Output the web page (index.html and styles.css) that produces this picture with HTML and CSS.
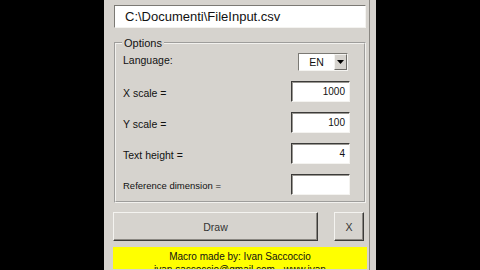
FILE: index.html
```html
<!DOCTYPE html>
<html lang="it">
<head>
    <meta charset="UTF-8">
    <meta name="viewport" content="width=device-width, initial-scale=1.0">
    <title>Macro</title>
    <link rel="stylesheet" href="styles.css">
</head>
<body>
    <div class="screen">
        <div class="window">
            <div class="panel">
                <div class="path-box">C:\Documenti\FileInput.csv</div>

                <fieldset class="options">
                    <legend>Options</legend>
                    <div class="row row-lang">
                        <span class="label">Language:</span>
                        <div class="combo">
                            <span class="combo-value">EN</span>
                            <span class="combo-btn">
                                <svg width="7" height="4" viewBox="0 0 7 4"><path d="M0 0h7L3.5 4z" fill="#000"/></svg>
                            </span>
                        </div>
                    </div>
                    <div class="row">
                        <span class="label">X scale =</span>
                        <div class="field">1000</div>
                    </div>
                    <div class="row">
                        <span class="label">Y scale =</span>
                        <div class="field">100</div>
                    </div>
                    <div class="row">
                        <span class="label">Text height =</span>
                        <div class="field">4</div>
                    </div>
                    <div class="row">
                        <span class="label small">Reference dimension =</span>
                        <div class="field"></div>
                    </div>
                </fieldset>

                <div class="actions">
                    <button class="btn btn-draw">Draw</button>
                    <button class="btn btn-close">X</button>
                </div>

                <div class="credits">
                    <div>Macro made by: Ivan Saccoccio</div>
                    <div>ivan.saccoccio@gmail.com - www.ivan</div>
                </div>
            </div>
        </div>
    </div>
</body>
</html>
```

FILE: styles.css
```css
body {
    margin: 0;
    background-color: #000;
    font-family: "Liberation Sans", Arial, sans-serif;
    font-size: 10.5px;
    color: #111;
}
.screen {
    width: 480px;
    height: 270px;
    overflow: hidden;
}
.window {
    margin-left: 104px;
    width: 272px;
    height: 270px;
    background-color: #d6d3ce;
}
.panel {
    box-sizing: border-box;
    width: 266px;
    height: 270px;
    border-right: 1px solid #8a8782;
    padding: 5px 0 0 9px;
}
.path-box {
    box-sizing: border-box;
    margin-left: 1px;
    width: 252px;
    height: 23px;
    line-height: 21px;
    padding-left: 10px;
    background: #fff;
    border: 1px solid;
    border-color: #7b7974 #f4f3f0 #f4f3f0 #7b7974;
    font-size: 13px;
}
.options {
    box-sizing: border-box;
    margin: 8px 0 0 1px;
    width: 252px;
    height: 167px;
    padding: 0 14px 0 7px;
    border: 2px groove #f2f1ee;
}
.options legend {
    margin-left: -1px;
    padding: 0 2px;
    font-size: 11px;
    line-height: 14px;
}
.row {
    display: flex;
    justify-content: space-between;
    align-items: center;
    height: 21px;
    margin-top: 10px;
}
.row-lang {
    height: 18px;
    margin-top: 3px;
    margin-bottom: 2px;
    align-items: flex-start;
}
.label {
    padding-top: 2px;
}
.label.small {
    font-size: 9.5px;
}
.row-lang .label {
    padding-top: 1px;
}
.combo {
    box-sizing: border-box;
    display: flex;
    width: 50px;
    height: 18px;
    margin-right: 2px;
    background: #fff;
    border: 1px solid;
    border-color: #7b7974 #f4f3f0 #f4f3f0 #7b7974;
}
.combo-value {
    flex: 1;
    text-align: center;
    line-height: 16px;
}
.combo-btn {
    box-sizing: border-box;
    display: flex;
    align-items: center;
    justify-content: center;
    width: 13px;
    background: #d6d3ce;
    border: 1px solid;
    border-color: #f4f3f0 #6e6c68 #6e6c68 #f4f3f0;
}
.field {
    box-sizing: border-box;
    width: 59px;
    height: 21px;
    line-height: 19px;
    padding-right: 4px;
    text-align: right;
    background: #fff;
    border: 1px solid;
    border-color: #3c3b39 #f4f3f0 #f4f3f0 #3c3b39;
    box-shadow: inset 1px 1px 0 #9a9893;
    font-size: 10px;
}
.actions {
    display: flex;
    gap: 16px;
    margin-top: 9px;
}
.btn {
    box-sizing: border-box;
    height: 29px;
    background: #d6d3ce;
    border: 1px solid;
    border-color: #f4f3f0 #3c3b39 #3c3b39 #f4f3f0;
    box-shadow: inset -1px -1px 0 #8a8782;
    font-family: inherit;
    font-size: 10.5px;
    color: #333;
    padding: 0;
}
.btn-draw {
    width: 205px;
}
.btn-close {
    width: 30px;
}
.credits {
    margin-top: 6px;
    width: 254px;
    height: 22px;
    overflow: hidden;
    padding-top: 3px;
    box-sizing: border-box;
    background: #ffff00;
    text-align: center;
    font-size: 10px;
    line-height: 13px;
}
```
